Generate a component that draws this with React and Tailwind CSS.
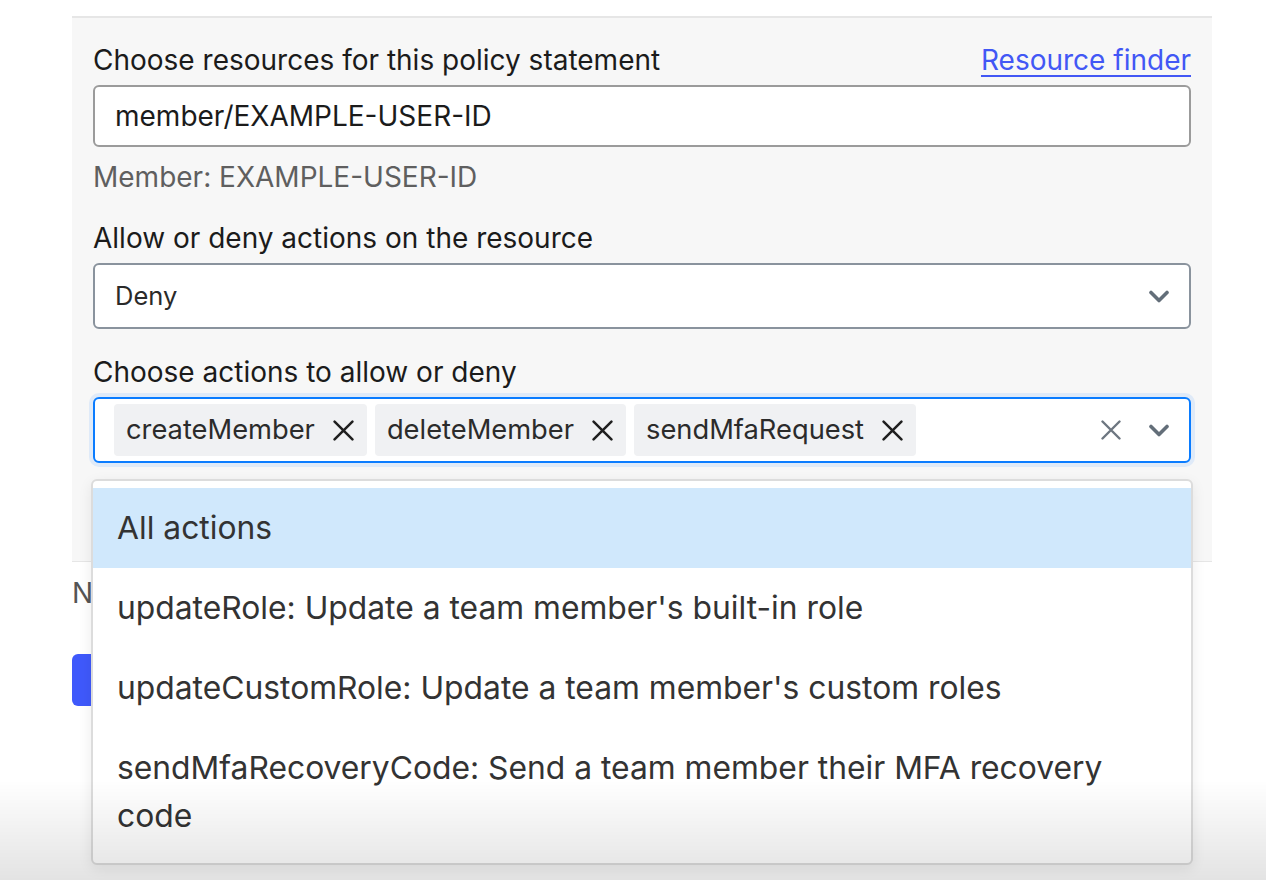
const CHIPS = ['createMember', 'deleteMember', 'sendMfaRequest']

const OPTIONS = [
  'All actions',
  "updateRole: Update a team member's built-in role",
  "updateCustomRole: Update a team member's custom roles",
  'sendMfaRecoveryCode: Send a team member their MFA recovery code',
]

function Cross({ className }) {
  return (
    <svg viewBox="0 0 20 20" className={className} fill="none" stroke="currentColor" strokeWidth="2.4" strokeLinecap="round">
      <path d="M1.5 1.5 18.5 18.5M18.5 1.5 1.5 18.5" />
    </svg>
  )
}

function Chevron({ className }) {
  return (
    <svg viewBox="0 0 20 13" className={className} fill="none" stroke="currentColor" strokeWidth="3.6" strokeLinecap="round" strokeLinejoin="round">
      <path d="M2 2.5 10 10.5 18 2.5" />
    </svg>
  )
}

export default function App() {
  return (
    <div className="relative min-h-[880px] bg-white font-['Inter',sans-serif] text-[#1b1b1b]">
      <div className="pt-4 px-[72px]">
        <div className="w-[1140px] bg-[#f7f7f7] border-t-2 border-b border-[#e6e6e6] px-[21px] pt-[25px] pb-[98px]">
          <div className="flex items-end justify-between">
            <label className="text-[28px] leading-[34px]">Choose resources for this policy statement</label>
            <a href="#" className="text-[28px] leading-[34px] text-[#4257f5] underline underline-offset-[5px] decoration-[2px]">
              Resource finder
            </a>
          </div>
          <div className="mt-[8px] h-[62px] bg-white border-2 border-[#9b9b9b] rounded-[6px] flex items-center px-[20px] text-[28px]">
            member/EXAMPLE-USER-ID
          </div>
          <p className="mt-[13px] text-[28px] leading-[34px] text-[#5f5f5f]">Member: EXAMPLE-USER-ID</p>

          <label className="block mt-[27px] text-[28px] leading-[34px]">Allow or deny actions on the resource</label>
          <div className="mt-[8px] h-[66px] bg-white border-2 border-[#8a939d] rounded-[6px] flex items-center justify-between pl-[20px] pr-[20px] text-[25.5px] text-[#2a2a2a]">
            <span>Deny</span>
            <Chevron className="w-[20px] h-[13px] text-[#636e79]" />
          </div>

          <label className="block mt-[26px] text-[28px] leading-[34px]">Choose actions to allow or deny</label>
          <div className="mt-[8px] h-[66px] bg-white border-2 border-[#0a7cff] rounded-[6px] ring-4 ring-[#dfeaf8] flex items-center pl-[19px] pr-[20px]">
            <div className="flex-1 flex gap-[8px]">
              {CHIPS.map(c => (
                <div key={c} className="h-[52px] bg-[#f0f1f3] rounded-[4px] flex items-center pl-[12px] pr-[13px] gap-[18px] text-[27.3px] text-[#2b2b2b]">
                  <span>{c}</span>
                  <Cross className="w-[21px] h-[21px] text-[#1f1f1f]" />
                </div>
              ))}
            </div>
            <Cross className="w-[20px] h-[20px] text-[#6d7680]" />
            <Chevron className="ml-[28px] w-[20px] h-[13px] text-[#636e79]" />
          </div>
        </div>

        <p className="mt-[14px] text-[28px] leading-[34px] text-[#555]">Note: changes apply to all members</p>
        <button className="mt-[44px] h-[52px] px-[20px] rounded-[6px] bg-[#3f59fb] text-white text-[28px]">Save statement</button>
      </div>

      <div className="absolute left-[91px] top-[479px] w-[1102px] bg-white border-2 border-[#dcdcdc] rounded-[6px] shadow-[0_4px_14px_rgba(0,0,0,0.08)] py-[7px] text-[31.8px] leading-[48px] text-[#333]">
        {OPTIONS.map((o, i) => (
          <div key={o} className={`px-[24px] py-[16px] ${i === 0 ? 'bg-[#d0e8fc]' : ''}`}>
            {o}
          </div>
        ))}
      </div>

      <div className="pointer-events-none fixed left-0 right-0 bottom-0 h-[100px] bg-gradient-to-b from-transparent to-[#0000001c]" />
    </div>
  )
}
